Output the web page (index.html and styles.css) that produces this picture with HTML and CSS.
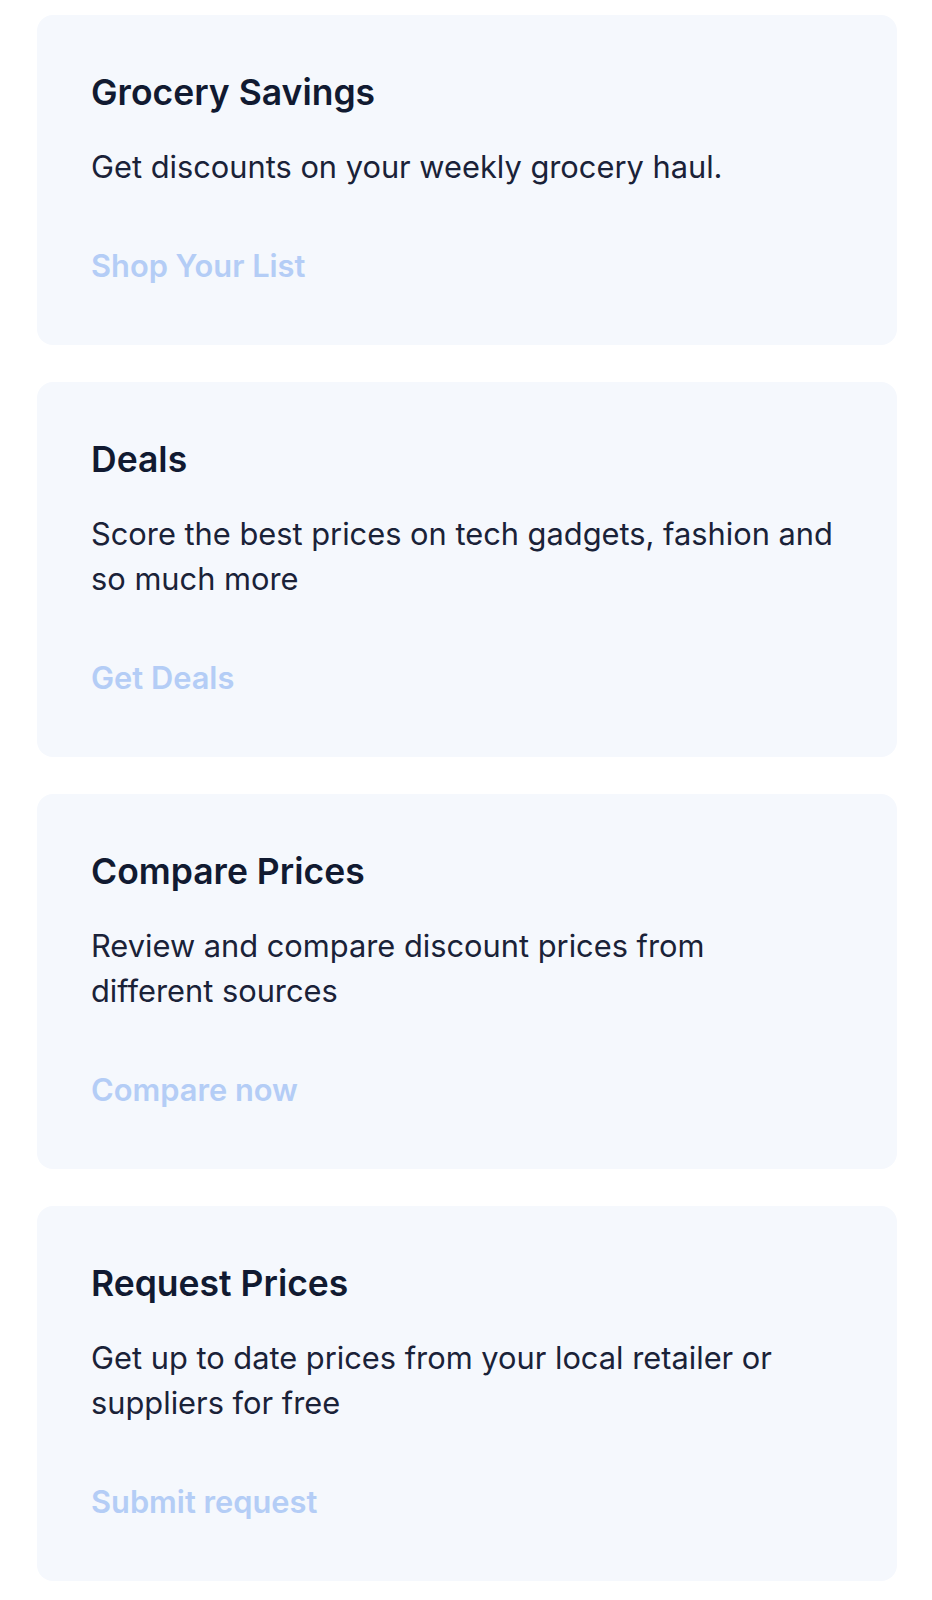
FILE: index.html
```html
<!DOCTYPE html>
<html lang="en">
<head>
    <meta charset="UTF-8" />
    <meta name="viewport" content="width=device-width, initial-scale=1" />
    <title>Savings</title>
    <link rel="stylesheet" href="styles.css">
</head>
<body>
    <main class="features">
        <section class="feature-card">
            <h2>Grocery Savings</h2>
            <p>Get discounts on your weekly grocery haul.</p>
            <a href="#" class="feature-link">Shop Your List</a>
        </section>

        <section class="feature-card">
            <h2>Deals</h2>
            <p>Score the best prices on tech gadgets, fashion and so much more</p>
            <a href="#" class="feature-link">Get Deals</a>
        </section>

        <section class="feature-card">
            <h2>Compare Prices</h2>
            <p>Review and compare discount prices from different sources</p>
            <a href="#" class="feature-link">Compare now</a>
        </section>

        <section class="feature-card">
            <h2>Request Prices</h2>
            <p>Get up to date prices from your local retailer or suppliers for free</p>
            <a href="#" class="feature-link">Submit request</a>
        </section>
    </main>
</body>
</html>
```

FILE: styles.css
```css
/* Feature cards list */
body {
    font-family: 'Inter', sans-serif;
    background: #fff;
    color: #141c33;
    margin: 0;
}
.features {
    display: flex;
    flex-direction: column;
    gap: 37px;
    padding: 15px 35px 22px 37px;
}
.feature-card {
    display: flex;
    flex-direction: column;
    align-items: flex-start;
    background: #f5f8fd;
    border-radius: 16px;
    padding: 58px 62px 57px 54px;
}
.feature-card h2 {
    margin: 0 0 31px;
    font-size: 35.5px;
    line-height: 40px;
    font-weight: 600;
    color: #111a31;
}
.feature-card p {
    margin: 0 0 54px;
    font-size: 30.8px;
    line-height: 45px;
    font-weight: 400;
    color: #1a2238;
}
.feature-link {
    font-size: 30.8px;
    line-height: 45px;
    font-weight: 600;
    color: #b4cdf6;
    text-decoration: none;
}
```
